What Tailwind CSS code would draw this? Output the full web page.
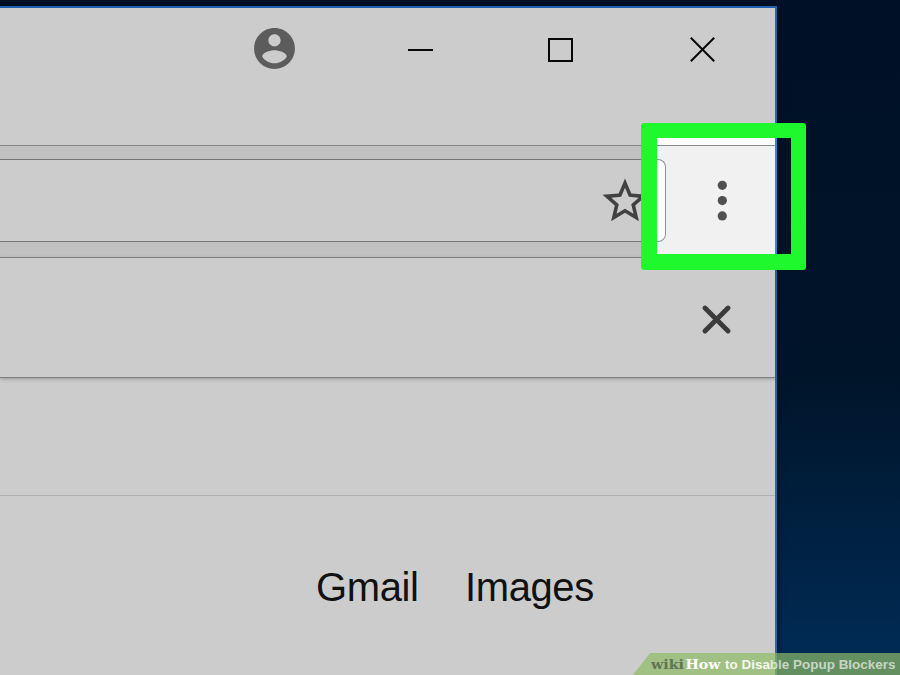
<!DOCTYPE html>
<html lang="en">
<head>
<meta charset="utf-8">
<title>Browser window</title>
<script src="https://cdn.jsdelivr.net/npm/@tailwindcss/browser@4"></script>
</head>
<body class="relative h-[675px] w-[900px] overflow-hidden bg-linear-to-b from-[#001127] from-0% via-[#001429] via-55% to-[#002b55] to-97% pt-1.5 font-['Liberation_Sans',Arial,sans-serif]">
  <main class="flex h-[669px] w-[777px] flex-col border-t-2 border-r-2 border-t-[#1c5fb0] border-r-[#2468b0] bg-[#cccccc] shadow-[0_0_6px_#000814]">
    <header class="flex h-[137px] shrink-0 items-start pt-4">
      <svg class="ml-[250px] h-[49px] w-[49px]" viewBox="0 0 24 24" fill="#5c5c5c"><path d="M12 2C6.480 2 2 6.480 2 12s4.480 10 10 10 10-4.480 10-10S17.520 2 12 2zm0 3c1.660 0 3 1.340 3 3s-1.340 3-3 3-3-1.340-3-3 1.340-3 3-3zm0 14.200c-2.500 0-4.710-1.280-6-3.220.030-1.990 4-3.080 6-3.080 1.990 0 5.970 1.090 6 3.080-1.290 1.940-3.500 3.220-6 3.220z"/></svg>
      <div class="mt-[25px] ml-[109px] h-0.5 w-[25px] bg-[#080808]"></div>
      <div class="mt-3.5 ml-[115px] h-6 w-[25px] border-2 border-[#080808]"></div>
      <svg class="mt-[13px] ml-[117px] h-[25px] w-[25px]" viewBox="0 0 25 25" fill="none" stroke="#080808" stroke-width="2"><path d="M.8.8 24.200 24.200M24.200.8.8 24.200"/></svg>
    </header>
    <section class="h-[113px] shrink-0 border-y border-[#858585] bg-[#c1c1c1] py-[13px]">
      <div class="flex h-[83px] w-[666px] justify-end rounded-r-lg border border-l-0 border-[#777777] bg-[#cccccc] pt-3.5 pr-[13.500px]">
        <svg class="h-[54px] w-[54px]" viewBox="0 0 24 24" fill="#414141"><path d="M22 9.240l-7.190-.620L12 2 9.190 8.630 2 9.240l5.460 4.730L5.820 21 12 17.270 18.180 21l-1.630-7.030L22 9.240zM12 15.400l-3.760 2.270 1-4.280-3.320-2.880 4.380-.380L12 6.100l1.710 4.040 4.380.380-3.320 2.880 1 4.280L12 15.400z"/></svg>
      </div>
    </section>
    <section class="flex h-[120px] shrink-0 justify-end border-b border-[#7d7d7d] pt-[47px] pr-[44px] shadow-[0_1px_4px_#00000040]">
      <svg class="h-[29px] w-[29px]" viewBox="0 0 29 29" fill="none" stroke="#3b3b3b" stroke-width="4.800" stroke-linecap="round"><path d="M3 3 26 26M26 3 3 26"/></svg>
    </section>
    <div class="h-[118px] shrink-0 border-b border-[#b0b0b0]"></div>
    <nav class="flex pt-[68px] pl-[316px] text-[40px] leading-[47px] tracking-[-0.4px] text-[#111111]">
      <a class="w-[149px] shrink-0">Gmail</a><a>Images</a>
    </nav>
  </main>

  <!-- Highlighted menu button -->
  <div class="absolute top-[123px] left-[641px] h-[147px] w-[165px] rounded-[3px] border-[16px] border-t-[15px] border-r-[15px] border-[#20f82e]">
    <div class="flex h-full w-[120px] flex-col border-r-2 border-[#2f86dc] bg-white">
      <div class="h-2 shrink-0 border-b border-[#8a8a8a]"></div>
      <div class="flex grow bg-[#f1f1f1] pt-[13px]">
        <div class="h-[83px] w-[9px] rounded-r-lg border border-l-0 border-[#909090] bg-white"></div>
        <svg class="mt-[18px] ml-[50px] h-[46px] w-[14px]" viewBox="0 0 14 46" fill="#505050"><circle cx="6.300" cy="8.300" r="4.600"/><circle cx="6.300" cy="23.600" r="4.600"/><circle cx="6.300" cy="38.900" r="4.600"/></svg>
      </div>
    </div>
  </div>

  <footer class="absolute right-0 bottom-0 flex h-[22px] w-[267px] items-center bg-[#8ebb65]/70 pl-[18px] font-bold whitespace-nowrap [clip-path:polygon(17px_0,100%_0,100%_100%,0_100%)]">
    <svg class="h-[22px] w-[246px]" viewBox="0 0 246 22">
      <g font-family="DejaVu Serif, serif" font-size="13.500"><text x="0" y="16" textLength="33" lengthAdjust="spacingAndGlyphs" fill="#5f7556">wiki</text><text x="34.500" y="16" textLength="35" lengthAdjust="spacingAndGlyphs" fill="#fff">How</text></g>
      <text x="74" y="16" textLength="170.500" lengthAdjust="spacingAndGlyphs" font-size="13" fill="#f4f8ef"><tspan>to Disa</tspan><tspan fill="#fff" fill-opacity=".65">ble Popup Blockers</tspan></text>
    </svg>
  </footer>
</body>
</html>
